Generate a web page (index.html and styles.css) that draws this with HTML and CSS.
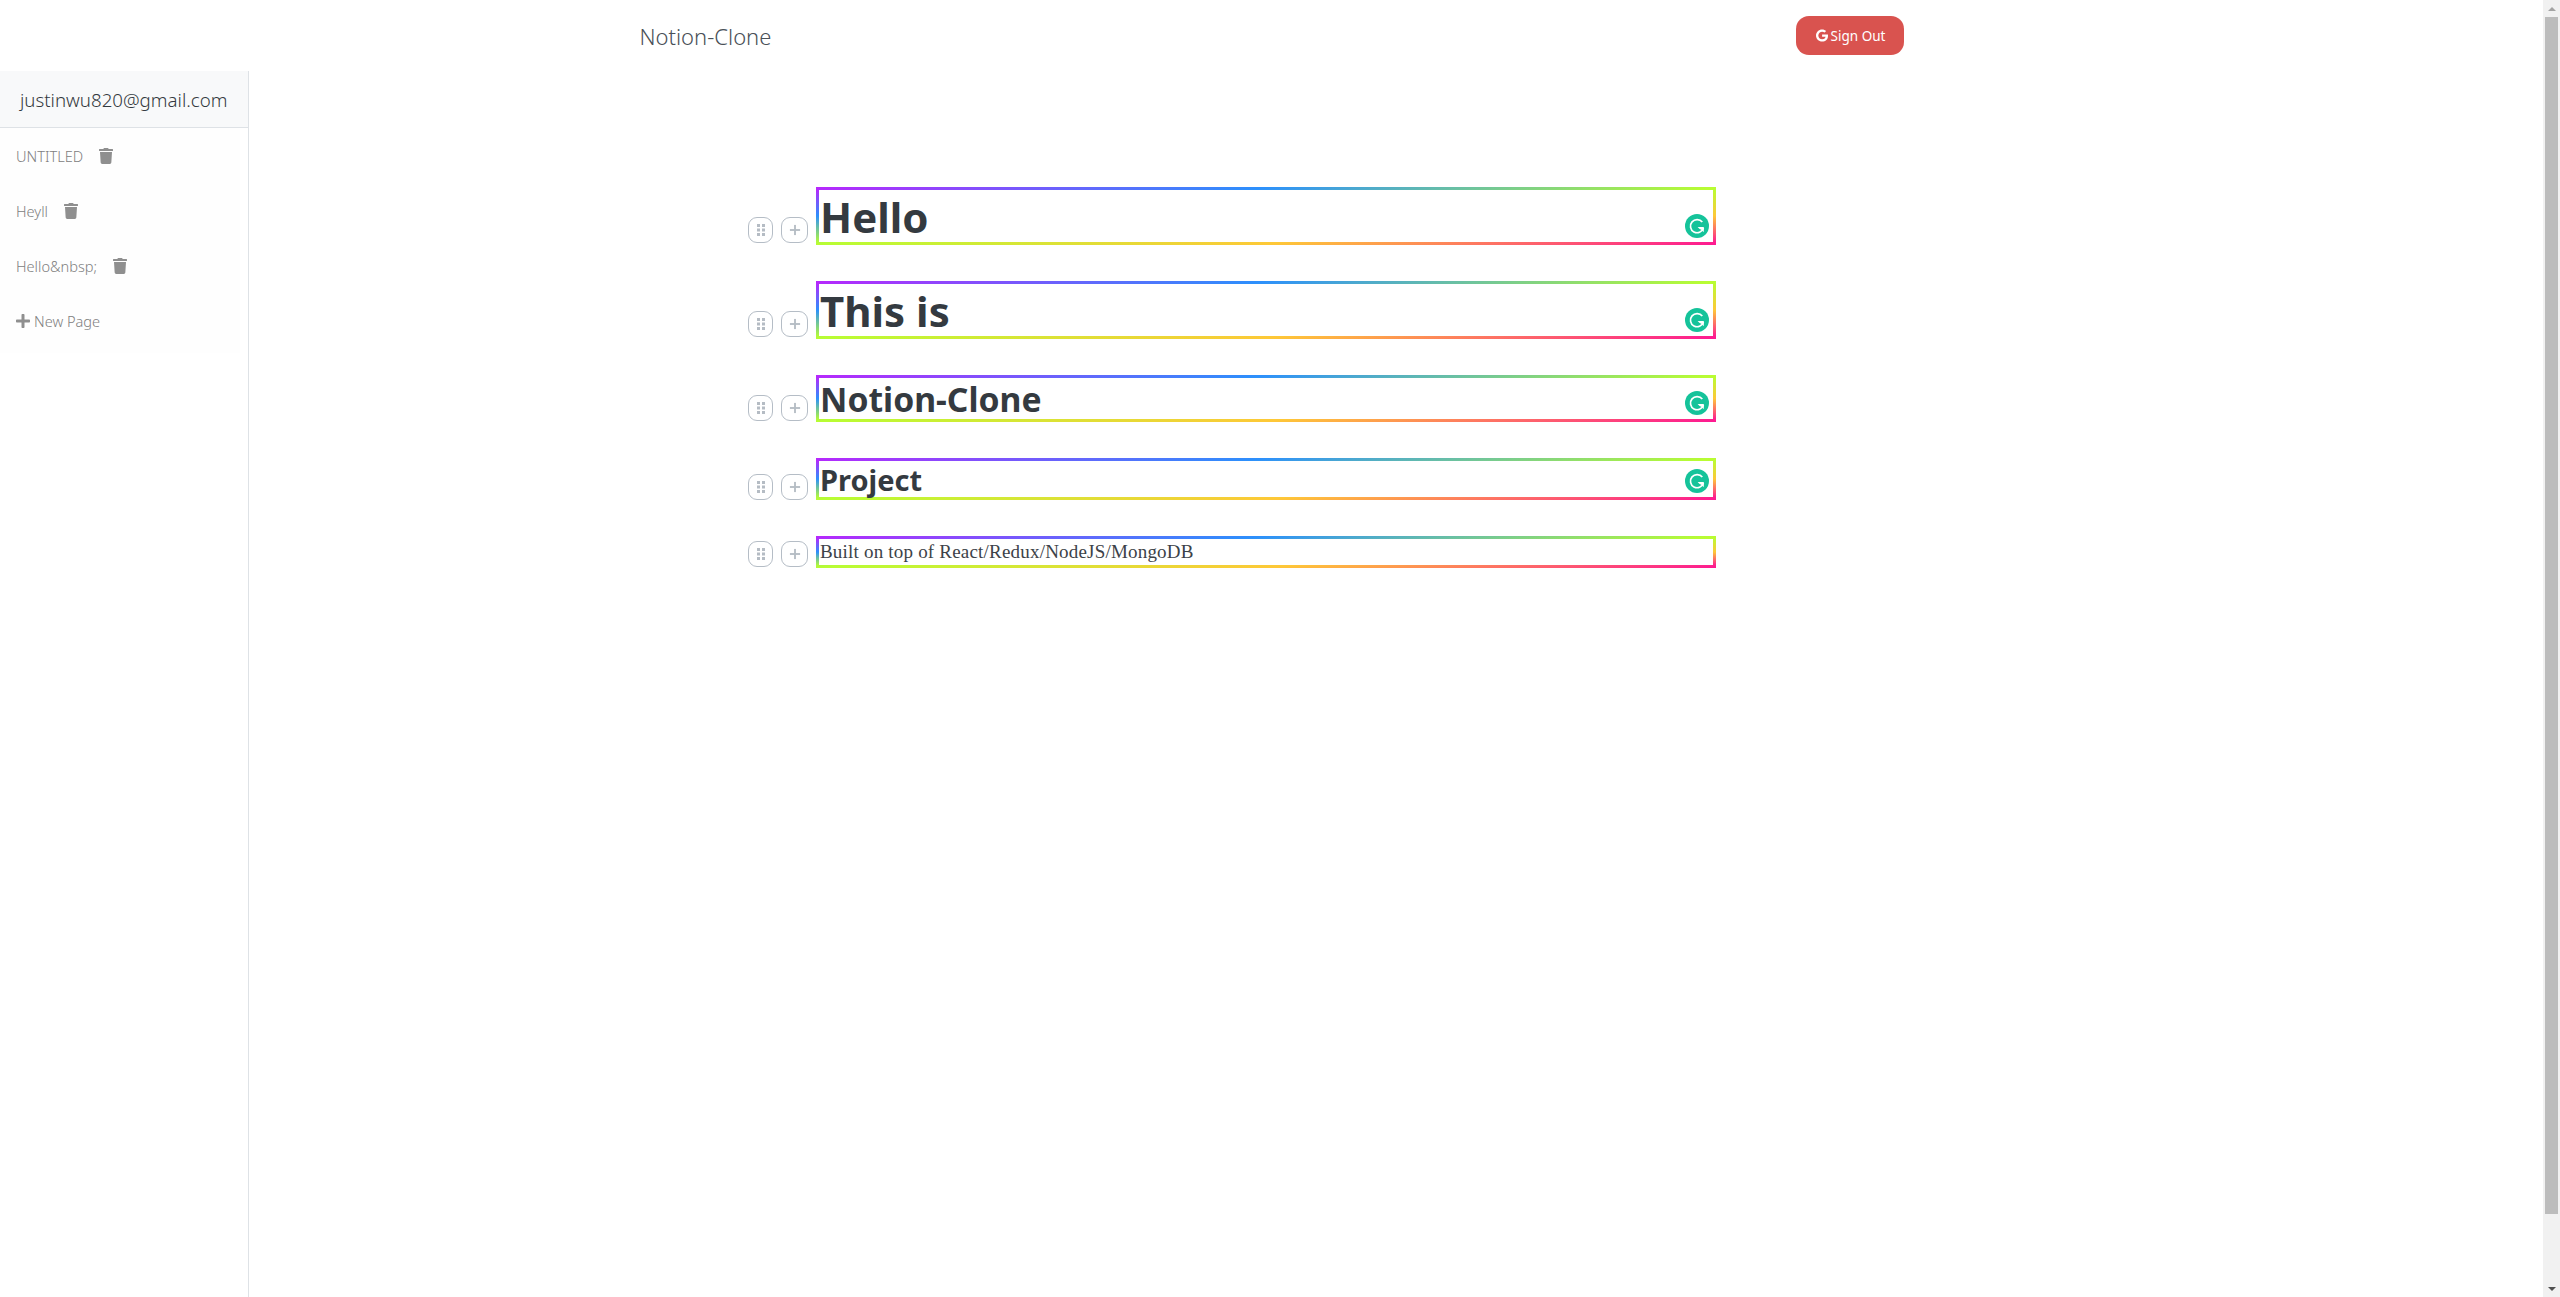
FILE: index.html
```html
<!DOCTYPE html>
<html lang="en">
<head>
<meta charset="utf-8">
<title>Notion-Clone</title>
<link rel="stylesheet" href="styles.css">
</head>
<body>
<svg class="defs" width="0" height="0" aria-hidden="true">
  <symbol id="i-trash" viewBox="0 0 448 512"><path d="M432 32H312l-9.4-18.7A24 24 0 0 0 281.1 0H166.8a23.72 23.72 0 0 0-21.4 13.3L136 32H16A16 16 0 0 0 0 48v32a16 16 0 0 0 16 16h416a16 16 0 0 0 16-16V48a16 16 0 0 0-16-16zM53.2 467a48 48 0 0 0 47.9 45h245.8a48 48 0 0 0 47.9-45L416 128H32z"/></symbol>
  <symbol id="i-plus" viewBox="0 0 448 512"><path d="M416 208H272V64c0-17.67-14.33-32-32-32h-32c-17.67 0-32 14.33-32 32v144H32c-17.67 0-32 14.33-32 32v32c0 17.67 14.33 32 32 32h144v144c0 17.67 14.33 32 32 32h32c17.67 0 32-14.33 32-32V304h144c17.67 0 32-14.33 32-32v-32c0-17.67-14.33-32-32-32z"/></symbol>
  <symbol id="i-grip" viewBox="0 0 8 12"><rect x="0" y="0" width="3" height="3"/><rect x="5" y="0" width="3" height="3"/><rect x="0" y="4.5" width="3" height="3"/><rect x="5" y="4.5" width="3" height="3"/><rect x="0" y="9" width="3" height="3"/><rect x="5" y="9" width="3" height="3"/></symbol>
  <symbol id="i-thin-plus" viewBox="0 0 13 13"><rect x="5.5" y="1" width="2" height="11"/><rect x="1" y="5.5" width="11" height="2"/></symbol>
  <symbol id="i-gram" viewBox="0 0 24 24"><circle cx="12" cy="12" r="12" fill="#15c39a"/><path d="M17.3 8.1A6.6 6.6 0 1 0 18.4 14" fill="none" stroke="#fff" stroke-width="1.7"/><path d="M12.6 13.1h6.2v5.2l-2-2.4-2.2-.9z" fill="#fff"/></symbol>
</svg>
<div class="app">
  <div class="content">
    <header class="nav">
      <div class="nav-inner">
        <span class="brand">Notion-Clone</span>
        <button class="signout" type="button"><svg class="g-icon" viewBox="0 0 488 512"><path d="M488 261.8C488 403.3 391.1 504 248 504 110.8 504 0 393.2 0 256S110.8 8 248 8c66.8 0 123 24.5 166.3 64.9l-67.5 64.9C258.5 52.6 94.3 116.6 94.3 256c0 86.5 69.1 156.6 153.7 156.6 98.2 0 135-70.4 140.8-106.9H248v-85.3h236.1c2.3 12.7 3.9 24.9 3.9 41.4z"/></svg>Sign Out</button>
      </div>
    </header>
    <div class="workspace">
      <aside class="sidebar">
        <div class="side-head">justinwu820@gmail.com</div>
        <ul class="pages">
          <li class="page"><span>UNTITLED</span><svg class="trash"><use href="#i-trash"/></svg></li>
          <li class="page"><span>Heyll</span><svg class="trash"><use href="#i-trash"/></svg></li>
          <li class="page"><span>Hello&amp;nbsp;</span><svg class="trash"><use href="#i-trash"/></svg></li>
          <li class="page new-page"><svg class="plus"><use href="#i-plus"/></svg><span>New Page</span></li>
        </ul>
      </aside>
      <main class="editor">
        <div class="row row-h1">
          <div class="handle grip"><svg><use href="#i-grip"/></svg></div>
          <div class="handle add"><svg><use href="#i-thin-plus"/></svg></div>
          <div class="block"><h1 class="t-h1">Hello</h1><svg class="gram"><use href="#i-gram"/></svg></div>
        </div>
        <div class="row row-h1">
          <div class="handle grip"><svg><use href="#i-grip"/></svg></div>
          <div class="handle add"><svg><use href="#i-thin-plus"/></svg></div>
          <div class="block"><h1 class="t-h1">This is</h1><svg class="gram"><use href="#i-gram"/></svg></div>
        </div>
        <div class="row row-h2">
          <div class="handle grip"><svg><use href="#i-grip"/></svg></div>
          <div class="handle add"><svg><use href="#i-thin-plus"/></svg></div>
          <div class="block"><h2 class="t-h2">Notion-Clone</h2><svg class="gram"><use href="#i-gram"/></svg></div>
        </div>
        <div class="row row-h3">
          <div class="handle grip"><svg><use href="#i-grip"/></svg></div>
          <div class="handle add"><svg><use href="#i-thin-plus"/></svg></div>
          <div class="block"><h3 class="t-h3">Project</h3><svg class="gram"><use href="#i-gram"/></svg></div>
        </div>
        <div class="row row-p">
          <div class="handle grip"><svg><use href="#i-grip"/></svg></div>
          <div class="handle add"><svg><use href="#i-thin-plus"/></svg></div>
          <div class="block"><p class="t-p">Built on top of React/Redux/NodeJS/MongoDB</p></div>
        </div>
      </main>
    </div>
  </div>
  <div class="scrollbar">
    <div class="arrow-btn"><span class="arrow-up"></span></div>
    <div class="thumb"></div>
    <div class="track-rest"></div>
    <div class="arrow-btn"><span class="arrow-down"></span></div>
  </div>
</div>
</body>
</html>
```
FILE: styles.css
```css
* { box-sizing: border-box; }
html, body { margin: 0; height: 100%; background: #fff; }
body { font-family: "Noto Sans", "Open Sans", sans-serif; color: #343a40; overflow: hidden; }
.defs { position: absolute; }
.app { display: flex; height: 1297px; }
.content { flex: 1; display: flex; flex-direction: column; min-width: 0; }

.nav { height: 71px; flex: none; }
.nav-inner { width: 1264px; height: 71px; margin: 0 auto; display: flex; align-items: center; justify-content: space-between; }
.brand { font-size: 22px; font-weight: 300; color: #495057; }
.signout { width: 108px; height: 39px; border: 0; border-radius: 13px; background: #d9534f; color: #fff; font: 13.5px "Noto Sans", sans-serif; display: flex; align-items: center; justify-content: center; gap: 3px; padding: 0 0 0 2px; }
.g-icon { width: 12px; height: 13px; fill: #fff; }

.workspace { flex: 1; display: flex; min-height: 0; }
.sidebar { width: 249px; flex: none; border-right: 1px solid #dee2e6; }
.side-head { height: 57px; background: #f8f9fa; border-bottom: 1px solid #dee2e6; display: flex; align-items: center; padding-left: 20px; font-size: 18.7px; font-weight: 300; padding-top: 1px; }
.pages { list-style: none; margin: 0; padding: 0 0 5px; background: #fefefe; width: 240px; }
.page { height: 55px; display: flex; align-items: center; padding-left: 16px; gap: 16px; font-size: 14.6px; font-weight: 300; color: #808080; }
.trash { width: 14px; height: 16px; fill: #8f8f8f; }
.new-page { gap: 4px; }
.plus { width: 14px; height: 16px; fill: #8f8f8f; }

.editor { flex: 1; padding: 116px 0 0 499px; }
.row { width: 968px; display: flex; align-items: flex-end; margin-bottom: 36px; }
.handle { flex: none; height: 26px; border: 1.5px solid #b5bdc6; border-radius: 9px; display: flex; align-items: center; justify-content: center; margin-right: 8px; }
.handle svg { fill: #b5bcc4; }
.grip { width: 25px; }
.grip svg { width: 8px; height: 12px; }
.add { width: 27px; }
.add svg { width: 12px; height: 12px; }
.row-h1 .handle { margin-bottom: 2px; }
.row-h2 .handle { margin-bottom: 1px; }
.row-p .handle { margin-bottom: 1px; }

.block { position: relative; width: 900px; border: 3px solid; border-image: linear-gradient(to bottom right, #b827fc 0%, #2c90fc 25%, #b8fd33 50%, #fec837 75%, #fd1892 100%) 1; padding: 0 0 0 1px; }
.t-h1, .t-h2, .t-h3, .t-p { margin: 0; color: #343a40; }
.t-h1 { height: 52px; font-size: 42px; line-height: 54px; font-weight: 700; }
.t-h2 { height: 41px; font-size: 33.7px; line-height: 43px; font-weight: 700; }
.t-h3 { height: 36px; font-size: 29px; line-height: 37px; font-weight: 700; }
.t-p { height: 26px; font-family: "Liberation Serif", serif; font-size: 19px; line-height: 26px; letter-spacing: 0.2px; color: #3c4248; }
.gram { position: absolute; right: 4px; bottom: 4px; width: 24px; height: 24px; }

.scrollbar { width: 17px; flex: none; background: #f1f1f1; display: flex; flex-direction: column; align-items: center; }
.arrow-btn { height: 17px; flex: none; display: flex; align-items: center; justify-content: center; }
.arrow-up { width: 0; height: 0; border-left: 4px solid transparent; border-right: 4px solid transparent; border-bottom: 4px solid #a3a3a3; }
.arrow-down { width: 0; height: 0; border-left: 4px solid transparent; border-right: 4px solid transparent; border-top: 4px solid #505050; }
.thumb { width: 13px; height: 1197px; flex: none; background: #bcbcbc; }
.track-rest { flex: 1; }
```
